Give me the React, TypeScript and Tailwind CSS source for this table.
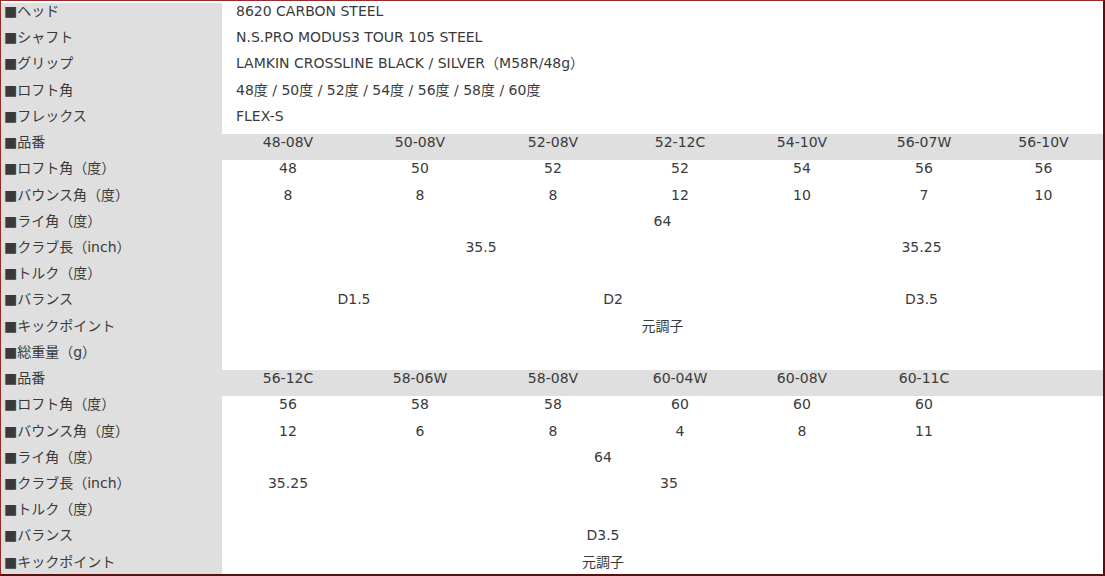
import React from "react";

type Cell = { t: string; s: number };

const c = (t: string, s = 1): Cell => ({ t, s });

const spanClass: Record<number, string> = {
  1: "col-span-1",
  2: "col-span-2",
  3: "col-span-3",
  4: "col-span-4",
  5: "col-span-5",
  6: "col-span-6",
  7: "col-span-7",
};

function Label({ text }: { text: string }) {
  return (
    <div className="bg-[#dfdfdf] pl-[3px] whitespace-nowrap">■{text}</div>
  );
}

function Row({
  label,
  cells,
  gray,
}: {
  label: string;
  cells: Cell[];
  gray?: boolean;
}) {
  return (
    <>
      <Label text={label} />
      {cells.map((cell, i) => (
        <div
          key={i}
          className={`${spanClass[cell.s]} text-center whitespace-nowrap ${
            gray ? "bg-[#dfdfdf]" : "bg-white"
          }`}
        >
          {cell.t}
        </div>
      ))}
    </>
  );
}

function InfoRow({ label, value }: { label: string; value: string }) {
  return (
    <>
      <Label text={label} />
      <div className="col-span-7 pl-[14px] whitespace-nowrap bg-white">{value}</div>
    </>
  );
}

export default function App() {
  return (
    <div className="w-[1105px] h-[576px] overflow-hidden bg-white border-t border-l border-t-[#9a2a2a] border-l-[#9a2a2a] border-r-2 border-b-2 border-r-[#5a1010] border-b-[#5a1010] box-border">
      <div
        className="grid grid-cols-[221px_132px_132px_134px_120px_124px_120px_1fr] auto-rows-[26.22px] pt-[2px] text-[14px] leading-[16px] text-[#3a3a3a]"
        style={{ fontFamily: '"DejaVu Sans", "Noto Sans CJK JP", sans-serif' }}
      >
        <InfoRow label="ヘッド" value="8620 CARBON STEEL" />
        <InfoRow label="シャフト" value="N.S.PRO MODUS3 TOUR 105 STEEL" />
        <InfoRow label="グリップ" value="LAMKIN CROSSLINE BLACK / SILVER（M58R/48g）" />
        <InfoRow label="ロフト角" value="48度 / 50度 / 52度 / 54度 / 56度 / 58度 / 60度" />
        <InfoRow label="フレックス" value="FLEX-S" />

        <Row
          label="品番"
          gray
          cells={[
            c("48-08V"),
            c("50-08V"),
            c("52-08V"),
            c("52-12C"),
            c("54-10V"),
            c("56-07W"),
            c("56-10V"),
          ]}
        />
        <Row
          label="ロフト角（度）"
          cells={[c("48"), c("50"), c("52"), c("52"), c("54"), c("56"), c("56")]}
        />
        <Row
          label="バウンス角（度）"
          cells={[c("8"), c("8"), c("8"), c("12"), c("10"), c("7"), c("10")]}
        />
        <Row label="ライ角（度）" cells={[c("64", 7)]} />
        <Row label="クラブ長（inch）" cells={[c("35.5", 4), c("35.25", 3)]} />
        <Row label="トルク（度）" cells={[c("", 7)]} />
        <Row label="バランス" cells={[c("D1.5", 2), c("D2", 2), c("D3.5", 3)]} />
        <Row label="キックポイント" cells={[c("元調子", 7)]} />
        <Row label="総重量（g）" cells={[c("", 7)]} />

        <Row
          label="品番"
          gray
          cells={[
            c("56-12C"),
            c("58-06W"),
            c("58-08V"),
            c("60-04W"),
            c("60-08V"),
            c("60-11C"),
            c(""),
          ]}
        />
        <Row
          label="ロフト角（度）"
          cells={[c("56"), c("58"), c("58"), c("60"), c("60"), c("60"), c("")]}
        />
        <Row
          label="バウンス角（度）"
          cells={[c("12"), c("6"), c("8"), c("4"), c("8"), c("11"), c("")]}
        />
        <Row label="ライ角（度）" cells={[c("64", 6), c("")]} />
        <Row label="クラブ長（inch）" cells={[c("35.25"), c("35", 5), c("")]} />
        <Row label="トルク（度）" cells={[c("", 6), c("")]} />
        <Row label="バランス" cells={[c("D3.5", 6), c("")]} />
        <Row label="キックポイント" cells={[c("元調子", 6), c("")]} />
      </div>
    </div>
  );
}
